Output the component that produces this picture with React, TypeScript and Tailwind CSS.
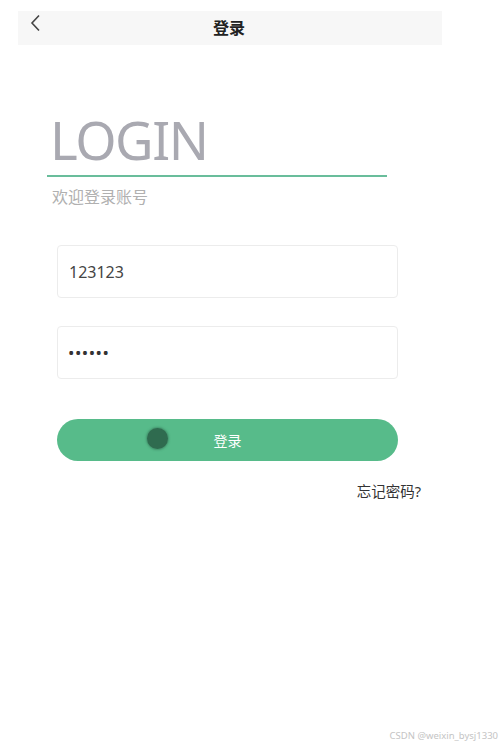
import React from 'react';

const font = { fontFamily: '"Noto Sans", "Noto Sans CJK SC", sans-serif' };

const App: React.FC = () => {
  return (
    <div
      className="relative w-[502px] h-[748px] bg-white overflow-hidden font-['Noto_Sans','Noto_Sans_CJK_SC',sans-serif]"
      style={font}
    >
      <div className="w-[424px] ml-[18px] pt-[11px]">
        {/* header */}
        <div className="relative h-[34px] bg-[#f7f7f7] flex items-center justify-center">
          <svg
            className="absolute left-[11px] top-[3px]"
            width="14"
            height="18"
            viewBox="0 0 14 18"
            fill="none"
          >
            <path d="M10 1.5 L3 9 L10 16.5" stroke="#444" strokeWidth="1.6" />
          </svg>
          <span className="text-[16px] font-bold text-[#222] leading-none -ml-[2px]">登录</span>
        </div>

        {/* title */}
        <div className="mt-[64px] ml-[29px] w-[340px]">
          <div className="pl-[3px] text-[53px] leading-[62px] text-[#a9a9b1] tracking-[-1.5px]">
            LOGIN
          </div>
          <div className="h-[2px] bg-[#69bd9b] mt-[4px]" />
          <div className="mt-[10px] pl-[5px] text-[16px] leading-[20px] text-[#b0b0b0]">
            欢迎登录账号
          </div>
        </div>

        {/* inputs */}
        <div className="ml-[39px] w-[341px] mt-[38px] flex flex-col gap-[28px]">
          <div className="h-[53px] border border-[#ececec] rounded-[4px] flex items-center px-[11px]">
            <span className="text-[16px] text-[#444]">123123</span>
          </div>
          <div className="h-[53px] border border-[#ececec] rounded-[4px] flex items-center px-[10px]">
            <span className="text-[17px] text-[#333] tracking-[0.5px]">••••••</span>
          </div>
        </div>

        {/* button */}
        <div className="ml-[39px] w-[341px] mt-[40px] h-[42px] rounded-full bg-[#57bb8a] relative flex items-center justify-center">
          <div className="absolute left-[90px] top-[9px] w-[21px] h-[21px] rounded-full bg-[#2f6b4f] shadow-[0_0_2px_1px_rgba(47,107,79,0.5)]" />
          <span className="text-[14px] text-white">登录</span>
        </div>

        <div className="mt-[20px] pr-[21px] flex justify-end">
          <span className="text-[14.5px] text-[#333]">忘记密码?</span>
        </div>
      </div>

      <div className="absolute right-[4px] bottom-[5px] text-[9.5px] text-[#c4c4c4]">
        CSDN @weixin_bysj1330
      </div>
    </div>
  );
};

export default App;
